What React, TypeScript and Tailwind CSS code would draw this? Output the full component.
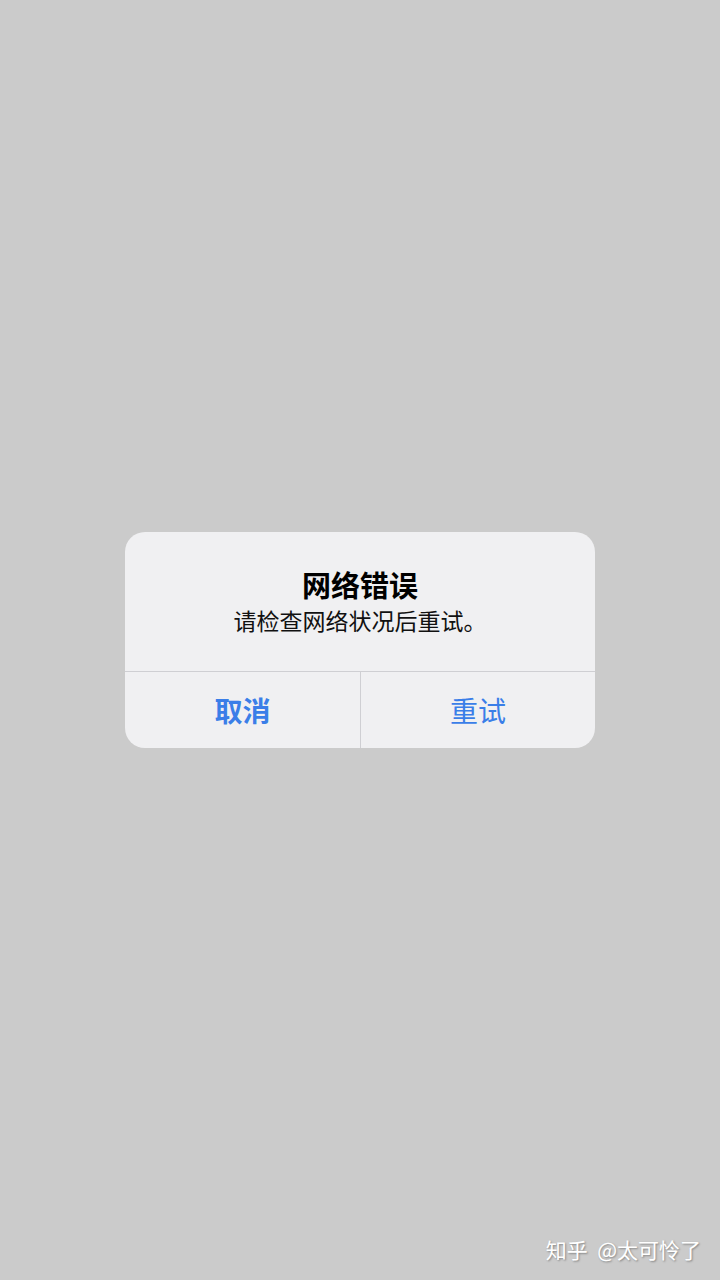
export default function App() {
  const font = { fontFamily: '"Noto Sans CJK SC", "Noto Sans", sans-serif' };
  return (
    <div className="relative flex h-[1280px] w-[720px] flex-col bg-[#cbcbcb]" style={font}>
      <div className="flex h-[532px] shrink-0" />
      <div className="mx-auto flex w-[470px] flex-col overflow-hidden rounded-[20px] bg-[#f0f0f2]">
        <div className="flex h-[139px] flex-col items-center pt-[33px]">
          <h1 className="text-[29px] leading-[38px] font-semibold text-black">网络错误</h1>
          <p className="text-[23px] leading-[34px] text-[#111]">请检查网络状况后重试。</p>
        </div>
        <div className="grid h-[77px] grid-cols-2 border-t border-[#cfcfd3]">
          <button className="text-[28px] font-semibold text-[#3a7ee8]">取消</button>
          <button className="border-l border-[#cfcfd3] text-[28px] text-[#3a7ee8]">重试</button>
        </div>
      </div>
      <div className="flex-1" />
      <div className="flex justify-end pr-[19px] pb-[16px]">
        <span className="text-[21px] leading-[30px] text-white [text-shadow:1px_1px_2px_rgba(0,0,0,0.35)]">
          知乎&nbsp;&nbsp;@太可怜了
        </span>
      </div>
    </div>
  );
}
